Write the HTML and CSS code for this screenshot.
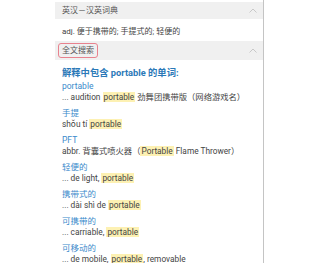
FILE: index.html
```html
<!DOCTYPE html>
<html>
<head>
  <meta charset="utf-8">
  <title>词典</title>
  <link rel="stylesheet" href="styles.css">
</head>
<body>
  <div class="panel">
    <div class="section-head">
      <span class="section-title">英汉－汉英词典</span>
      <svg class="caret" width="8" height="5" viewBox="0 0 8 5"><polyline points="0.5,4.5 4,1 7.5,4.5" fill="none" stroke="#c8c8c8" stroke-width="1"/></svg>
    </div>
    <div class="def-row">adj. 便于携带的; 手提式的; 轻便的</div>
    <div class="section-head">
      <span class="section-title boxed">全文搜索</span>
      <svg class="caret" width="8" height="5" viewBox="0 0 8 5"><polyline points="0.5,4.5 4,1 7.5,4.5" fill="none" stroke="#c8c8c8" stroke-width="1"/></svg>
    </div>

    <div class="results">
      <div class="results-title">解释中包含 portable 的单词:</div>

      <div class="entry">
        <div class="entry-word">portable</div>
        <div class="entry-text">... audition <mark>portable</mark> 劲舞团携带版（网络游戏名）</div>
      </div>
      <div class="entry">
        <div class="entry-word">手提</div>
        <div class="entry-text">shǒu tí <mark>portable</mark></div>
      </div>
      <div class="entry">
        <div class="entry-word">PFT</div>
        <div class="entry-text">abbr. 背囊式喷火器（<mark>Portable</mark> Flame Thrower）</div>
      </div>
      <div class="entry">
        <div class="entry-word">轻便的</div>
        <div class="entry-text">... de light, <mark>portable</mark></div>
      </div>
      <div class="entry">
        <div class="entry-word">携带式的</div>
        <div class="entry-text">... dài shì de <mark>portable</mark></div>
      </div>
      <div class="entry">
        <div class="entry-word">可携带的</div>
        <div class="entry-text">... carriable, <mark>portable</mark></div>
      </div>
      <div class="entry">
        <div class="entry-word">可移动的</div>
        <div class="entry-text">... de mobile, <mark>portable</mark>, removable</div>
      </div>
    </div>
  </div>
</body>
</html>
```
FILE: styles.css
```css
body {
  margin: 0;
  background: #fff;
  font-family: Roboto, "Noto Sans CJK SC", sans-serif;
  color: #444;
}

.panel {
  margin-left: 55px;
  padding-top: 2px;
  width: 208px;
  height: 261px;
  border-right: 1px solid #c4c4c4;
  overflow: hidden;
}

.section-head {
  display: flex;
  align-items: center;
  justify-content: space-between;
  height: 17px;
  padding: 0 6px 0 7px;
  background: #f0f0f0;
}

.section-head + .def-row + .section-head {
  height: 19px;
  padding-left: 3px;
}

.section-title {
  font-size: 8px;
  color: #555;
  line-height: 11px;
}

.section-title.boxed {
  padding: 1px 3px;
  border: 1px solid #e8828e;
  border-radius: 3px;
  line-height: 11px;
}

.caret {
  display: block;
}

.def-row {
  height: 22px;
  padding: 0 7px;
  display: flex;
  align-items: center;
  font-size: 8px;
  color: #444;
}

.results {
  padding: 7px 7px 0;
}

.results-title {
  font-size: 9.3px;
  font-weight: bold;
  color: #2b79b8;
  line-height: 12px;
  margin-bottom: 2px;
}

.entry {
  margin-bottom: 6px;
}

.entry-word {
  font-size: 8.5px;
  line-height: 11px;
  color: #3b8acb;
}

.entry-text {
  font-size: 8.3px;
  line-height: 10px;
  color: #444;
  white-space: nowrap;
}

mark {
  background: #fdf1b3;
  color: #444;
  padding: 0 1px;
}
```
